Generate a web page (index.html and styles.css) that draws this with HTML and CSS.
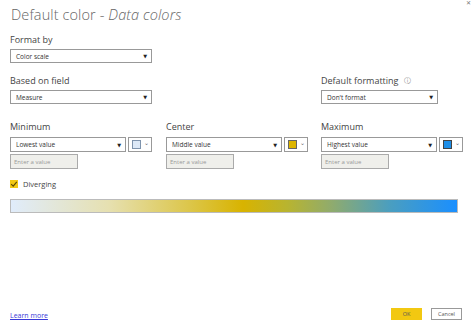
FILE: index.html
```html
<!DOCTYPE html>
<html>
<head>
<meta charset="utf-8">
<link rel="stylesheet" href="styles.css">
</head>
<body>
<div class="dialog">
  <span class="close">✕</span>
  <h1 class="title">Default color - <em>Data colors</em></h1>

  <div class="label lbl-format">Format by</div>
  <div class="select wide"><span>Color scale</span><span class="arrow">▼</span></div>

  <div class="row-two">
    <div class="col">
      <div class="label">Based on field</div>
      <div class="select wide"><span>Measure</span><span class="arrow">▼</span></div>
    </div>
    <div class="col">
      <div class="label">Default formatting <span class="info">ⓘ</span></div>
      <div class="select df"><span>Don't format</span><span class="arrow">▼</span></div>
    </div>
  </div>

  <div class="grid3">
    <div class="col">
      <div class="label">Minimum</div>
      <div class="pick">
        <div class="select s1"><span>Lowest value</span><span class="arrow">▼</span></div>
        <div class="swatch-btn"><span class="sw sw-min"></span><span class="caret">⌄</span></div>
      </div>
      <div class="input">Enter a value</div>
    </div>
    <div class="col">
      <div class="label">Center</div>
      <div class="pick">
        <div class="select s1"><span>Middle value</span><span class="arrow">▼</span></div>
        <div class="swatch-btn"><span class="sw sw-mid"></span><span class="caret">⌄</span></div>
      </div>
      <div class="input">Enter a value</div>
    </div>
    <div class="col">
      <div class="label">Maximum</div>
      <div class="pick">
        <div class="select s1"><span>Highest value</span><span class="arrow">▼</span></div>
        <div class="swatch-btn"><span class="sw sw-max"></span><span class="caret">⌄</span></div>
      </div>
      <div class="input">Enter a value</div>
    </div>
  </div>

  <div class="check-row">
    <span class="checkbox"><svg width="8" height="8" viewBox="0 0 8 8"><path d="M1.2 4.2 L3.2 6.2 L6.8 1.8" fill="none" stroke="#5a4a00" stroke-width="1.1"/></svg></span>
    <span class="check-label">Diverging</span>
  </div>

  <div class="gradient"></div>

  <div class="footer">
    <a class="learn" href="#">Learn more</a>
    <div class="buttons">
      <button class="btn ok">OK</button>
      <button class="btn cancel">Cancel</button>
    </div>
  </div>
</div>
</body>
</html>
```
FILE: styles.css
```css
* { box-sizing: border-box; }
html, body { margin: 0; padding: 0; background: #fff; }
body {
  width: 474px;
  height: 332px;
  overflow: hidden;
  font-family: "Open Sans", "Noto Sans", "DejaVu Sans", sans-serif;
  color: #333;
}
.dialog {
  position: relative;
  height: 332px;
  padding: 0 12px 12px 10px;
  display: flex;
  flex-direction: column;
}
.close {
  position: absolute;
  right: 3px;
  top: 0;
  font-size: 6px;
  line-height: 7px;
  color: #777;
}
.title {
  margin: 5px 0 0 1px;
  font-size: 14.5px;
  line-height: 20px;
  font-weight: 300;
  color: #666;
  letter-spacing: 0.1px;
}
.title em { font-style: italic; }
.label {
  font-size: 9px;
  line-height: 12px;
  color: #444;
  height: 12px;
}
.lbl-format { margin-top: 9px; margin-bottom: 3px; }
.info { font-size: 7px; color: #888; margin-left: 3px; vertical-align: 1px; }
.select {
  height: 14px;
  border: 1px solid #999;
  background: #fff;
  display: flex;
  align-items: center;
  justify-content: space-between;
  padding: 0 4px 0 5px;
  font-size: 6.5px;
  color: #333;
}
.arrow { font-size: 5px; color: #222; }
.wide { width: 142px; }
.df { width: 117px; }
.row-two {
  margin-top: 12px;
  display: grid;
  grid-template-columns: 311px auto;
}
.row-two .label { margin-bottom: 3px; }
.grid3 {
  margin-top: 17px;
  display: grid;
  grid-template-columns: 156px 155px auto;
}
.grid3 .label { margin-bottom: 4px; }
.pick { display: flex; gap: 2px; height: 15px; }
.pick .select { width: 116px; height: 15px; }
.swatch-btn {
  width: 24px;
  height: 15px;
  border: 1px solid #999;
  display: flex;
  align-items: center;
  padding-left: 3px;
  gap: 3px;
}
.sw { width: 9px; height: 9px; border: 1px solid #888; display: block; }
.sw-min { background: #dde9f7; border-color: #7f94ad; }
.sw-mid { background: #ddb500; border-color: #666; }
.sw-max { background: #1f8fe8; border-color: #444; }
.caret { font-size: 6px; color: #666; line-height: 6px; margin-top: -3px; }
.input {
  margin-top: 2px;
  width: 68px;
  height: 15px;
  border: 1px solid #aaa;
  background: #efefeb;
  font-size: 6px;
  color: #999;
  padding-left: 3px;
  display: flex;
  align-items: center;
}
.check-row {
  margin-top: 10px;
  display: flex;
  align-items: center;
  gap: 5px;
  height: 9px;
}
.checkbox {
  width: 8px;
  height: 8px;
  background: #f2c811;
  display: block;
}
.checkbox svg { display: block; }
.check-label { font-size: 7.5px; color: #444; }
.gradient {
  margin-top: 11px;
  width: 448px;
  height: 14px;
  border: 1px solid #bbb;
  background: linear-gradient(to right, #e0ecfb 0%, #e6e0b0 22%, #dcc64a 40%, #d8b300 52%, #b8b430 62%, #8fab6e 72%, #4a9ec0 85%, #1a8fff 100%);
}
.footer {
  margin-top: auto;
  display: flex;
  align-items: center;
  justify-content: space-between;
  height: 12px;
}
.learn { font-size: 7px; color: #3a3ad8; text-decoration: underline; margin-top: 2px; }
.buttons { display: flex; gap: 9px; }
.btn {
  width: 31px;
  height: 12px;
  font-family: inherit;
  font-size: 5.5px;
  padding: 0;
  margin: 0;
  line-height: 10px;
}
.ok { background: #f2c811; border: 1px solid #f2c811; color: #555; }
.cancel { background: #fff; border: 1px solid #999; color: #555; }
```
